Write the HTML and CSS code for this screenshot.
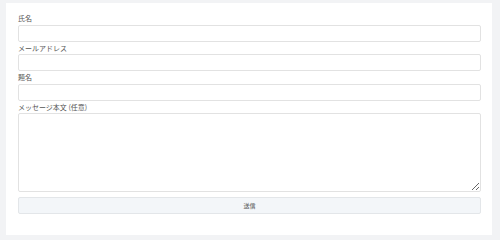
FILE: index.html
```html
<!DOCTYPE html>
<html lang="ja">
<head>
  <meta charset="UTF-8" />
  <meta name="viewport" content="width=device-width, initial-scale=1.0"/>
  <title>お問い合わせ</title>
  <link rel="stylesheet" href="styles.css">
</head>
<body>

<form class="card">
  <label class="label" for="name">氏名</label>
  <input class="field" type="text" id="name" />

  <label class="label" for="email">メールアドレス</label>
  <input class="field" type="email" id="email" />

  <label class="label" for="subject">題名</label>
  <input class="field" type="text" id="subject" />

  <label class="label" for="message">メッセージ本文 (任意)</label>
  <textarea class="field message" id="message"></textarea>

  <button class="send" type="button">送信</button>
</form>

</body>
</html>
```

FILE: styles.css
```css
body {
  font-family: "Noto Sans CJK JP", "Noto Sans", sans-serif;
  background: #f2f3f5;
  margin: 0;
  padding: 3px 8px 5px 6px;
}

.card {
  display: flex;
  flex-direction: column;
  background: white;
  height: 232px;
  box-sizing: border-box;
  padding: 9px 11px 0 12px;
}

.label {
  font-size: 7px;
  line-height: 12.5px;
  color: #555;
}

.field {
  box-sizing: border-box;
  height: 17px;
  margin: 0;
  border: 1px solid #e2e2e2;
  border-radius: 2px;
  background: white;
  font-family: inherit;
}

.message {
  height: 78.5px;
  resize: vertical;
}

.send {
  height: 17px;
  margin-top: 5px;
  background: #f3f6f9;
  border: 1px solid #e3e6e9;
  border-radius: 2px;
  font-family: inherit;
  font-size: 6px;
  color: #555;
  padding: 0;
}
```
